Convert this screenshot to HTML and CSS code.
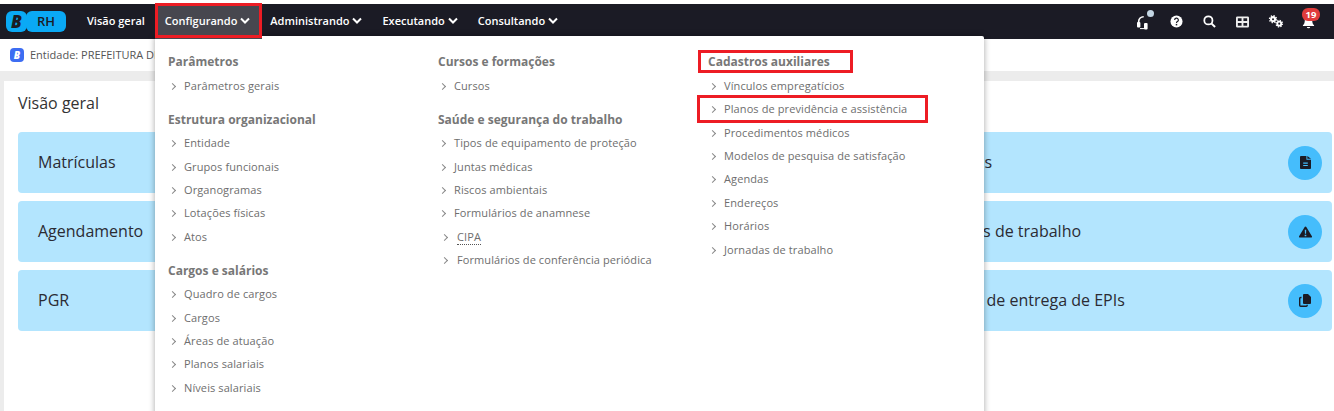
FILE: index.html
```html
<!DOCTYPE html>
<html lang="en">
<head>
  <meta charset="UTF-8" />
  <meta name="viewport" content="width=device-width, initial-scale=1.0" />
  <title>RH - Visão geral</title>
  <link rel="stylesheet" href="styles.css">
</head>
<body>
  <header class="navbar">
    <div class="logo"><span class="logo-b">B</span><span class="logo-rh">RH</span></div>
    <nav class="nav-links">
      <a class="nav-link">Visão geral</a>
      <a class="nav-link nav-active">Configurando <svg class="chev" viewBox="0 0 10 7"><path d="M1 1.500l4 4 4-4" /></svg></a>
      <a class="nav-link">Administrando <svg class="chev" viewBox="0 0 10 7"><path d="M1 1.500l4 4 4-4" /></svg></a>
      <a class="nav-link">Executando <svg class="chev" viewBox="0 0 10 7"><path d="M1 1.500l4 4 4-4" /></svg></a>
      <a class="nav-link">Consultando <svg class="chev" viewBox="0 0 10 7"><path d="M1 1.500l4 4 4-4" /></svg></a>
    </nav>
    <div class="nav-icons">
      <span class="nav-icon icon-headset">
        <svg viewBox="0 0 16 16" width="16" height="16"><path d="M2.700 10V7.500a4.800 4.800 0 0 1 5-4.800" fill="none" stroke="#fff" stroke-width="1.600"/><rect x="1" y="8" width="3.400" height="5.500" rx="1" fill="#fff"/><rect x="8" y="9" width="3.600" height="6.500" rx="1" fill="#fff"/><path d="M4 14.600h4" stroke="#fff" stroke-width="1"/></svg>
        <i class="status-dot"></i>
      </span>
      <span class="nav-icon">
        <svg viewBox="0 0 14 14" width="13" height="13"><circle cx="7" cy="7" r="6.500" fill="#fff"/><path d="M5 5.400a2 2 0 1 1 3 1.700c-.7.4-1 .7-1 1.400" fill="none" stroke="#1b1b25" stroke-width="1.300"/><rect x="6.200" y="9.600" width="1.600" height="1.600" fill="#1b1b25"/></svg>
      </span>
      <span class="nav-icon">
        <svg viewBox="0 0 14 14" width="13" height="13"><circle cx="5.800" cy="5.800" r="4.400" fill="none" stroke="#fff" stroke-width="1.900"/><path d="M9 9l4 4" stroke="#fff" stroke-width="2.200"/></svg>
      </span>
      <span class="nav-icon">
        <svg viewBox="0 0 14 12" width="13" height="12"><path fill="#eee" fill-rule="evenodd" d="M1.500 0h11A1.500 1.500 0 0 1 14 1.500v9a1.500 1.500 0 0 1-1.500 1.500h-11A1.500 1.500 0 0 1 0 10.500v-9A1.500 1.500 0 0 1 1.500 0zM2 2v3h4V2zm6 0v3h4V2zM2 7v3h4V7zm6 0v3h4V7z"/></svg>
      </span>
      <span class="nav-icon">
        <svg viewBox="0 0 16 14" width="16" height="13"><g fill="none" stroke="#fff"><circle cx="4.800" cy="4.500" r="2.200" stroke-width="2.200"/><circle cx="4.800" cy="4.500" r="3.800" stroke-width="1.400" stroke-dasharray="1.500 1.480"/><circle cx="11.500" cy="9.300" r="2.100" stroke-width="2"/><circle cx="11.500" cy="9.300" r="3.500" stroke-width="1.300" stroke-dasharray="1.400 1.350"/></g></svg>
      </span>
      <span class="nav-icon icon-bell">
        <svg viewBox="0 0 14 14" width="13" height="14"><path fill="#fff" d="M7 1a4 4 0 0 1 4 4c0 3 .8 4.400 2 5.500v.8H1v-.8C2.200 9.400 3 8 3 5a4 4 0 0 1 4-4z"/><path fill="#fff" d="M5.200 12.300h3.600a1.800 1.400 0 0 1-3.600 0z"/></svg>
        <b class="badge">19</b>
      </span>
    </div>
  </header>

  <div class="entity-bar">
    <span class="entity-icon">B</span>
    <span>Entidade: PREFEITURA DE</span>
  </div>

  <main class="overview">
    <h1 class="overview-title">Visão geral</h1>
    <div class="card-grid">
      <div class="card"><span>Matrículas</span></div>
      <div class="card"></div>
      <div class="card">
        <span>Atestados</span>
        <i class="card-icon"><svg viewBox="0 0 12 14" width="11" height="13"><path fill="#1b1b25" fill-rule="evenodd" d="M1 0h6v4h5v9a1 1 0 0 1-1 1H1a1 1 0 0 1-1-1V1a1 1 0 0 1 1-1zm2.500 7v1.300h5V7zm0 2.600v1.300h5V9.600zM8 0l4 3H8z"/></svg></i>
      </div>
      <div class="card"><span>Agendamento</span></div>
      <div class="card"></div>
      <div class="card">
        <span>Acidentes de trabalho</span>
        <i class="card-icon"><svg viewBox="0 0 14 12" width="13" height="12"><path fill="#1b1b25" fill-rule="evenodd" d="M7 0c.4 0 .7.2.9.5l6 10c.4.7 0 1.500-.9 1.500H1c-.9 0-1.300-.8-.9-1.500l6-10C6.300.2 6.600 0 7 0zM6.200 3.500l.2 4.500h1.200l.2-4.500zM6.100 9v1.600h1.800V9z"/></svg></i>
      </div>
      <div class="card"><span>PGR</span></div>
      <div class="card"></div>
      <div class="card">
        <span>Controle de entrega de EPIs</span>
        <i class="card-icon"><svg viewBox="0 0 12 13" width="12" height="13"><path fill="#1b1b25" d="M5 0h4l3 3v6a1 1 0 0 1-1 1H5a1 1 0 0 1-1-1V1a1 1 0 0 1 1-1z"/><path fill="none" stroke="#1b1b25" stroke-width="1.400" d="M2.500 3.500h-.8a1 1 0 0 0-1 1v6.800a1 1 0 0 0 1 1h5.500a1 1 0 0 0 1-1v-.5"/></svg></i>
      </div>
    </div>
  </main>

  <!-- Configurando dropdown -->
  <div class="mega-menu">
    <div class="menu-col">
      <h3>Parâmetros</h3>
      <a class="menu-item">Parâmetros gerais</a>
      <h3 class="next">Estrutura organizacional</h3>
      <a class="menu-item">Entidade</a>
      <a class="menu-item">Grupos funcionais</a>
      <a class="menu-item">Organogramas</a>
      <a class="menu-item">Lotações físicas</a>
      <a class="menu-item">Atos</a>
      <h3 class="next">Cargos e salários</h3>
      <a class="menu-item">Quadro de cargos</a>
      <a class="menu-item">Cargos</a>
      <a class="menu-item">Áreas de atuação</a>
      <a class="menu-item">Planos salariais</a>
      <a class="menu-item">Níveis salariais</a>
    </div>
    <div class="menu-col">
      <h3>Cursos e formações</h3>
      <a class="menu-item">Cursos</a>
      <h3 class="next">Saúde e segurança do trabalho</h3>
      <a class="menu-item">Tipos de equipamento de proteção</a>
      <a class="menu-item">Juntas médicas</a>
      <a class="menu-item">Riscos ambientais</a>
      <a class="menu-item">Formulários de anamnese</a>
      <a class="menu-item item-wide"><span class="dotted">CIPA</span></a>
      <a class="menu-item item-wide">Formulários de conferência periódica</a>
    </div>
    <div class="menu-col">
      <h3>Cadastros auxiliares</h3>
      <a class="menu-item">Vínculos empregatícios</a>
      <a class="menu-item">Planos de previdência e assistência</a>
      <a class="menu-item">Procedimentos médicos</a>
      <a class="menu-item">Modelos de pesquisa de satisfação</a>
      <a class="menu-item">Agendas</a>
      <a class="menu-item">Endereços</a>
      <a class="menu-item">Horários</a>
      <a class="menu-item">Jornadas de trabalho</a>
    </div>
  </div>

  <!-- red highlight boxes -->
  <div class="mark mark-nav"></div>
  <div class="mark mark-head"></div>
  <div class="mark mark-item"></div>
</body>
</html>
```

FILE: styles.css
```css
* {
  box-sizing: border-box;
}
html, body {
  height: 411px;
  overflow: hidden;
}
body {
  font-family: 'Open Sans', sans-serif;
  margin: 0;
  padding-top: 4px;
  background: #fff;
  color: #333;
  position: relative;
}

/* Navbar */
.navbar {
  height: 35px;
  background: #1b1b25;
  color: #fff;
  display: flex;
  align-items: center;
  padding-left: 6px;
}
.logo {
  width: 60px;
  height: 21px;
  display: flex;
  color: #1b1b25;
}
.logo-b {
  width: 21px;
  background: #0aa9f5;
  border-radius: 6px;
  text-align: center;
  font-weight: 800;
  font-style: italic;
  font-size: 17px;
  line-height: 21px;
}
.logo-rh {
  flex: 1;
  background: #0aa9f5;
  border-radius: 6px;
  margin-left: -1px;
  padding-left: 11px;
  font-size: 13px;
  line-height: 21px;
  font-weight: 600;
}
.nav-links {
  display: flex;
  height: 100%;
  margin-left: 11px;
}
.nav-link {
  display: flex;
  align-items: center;
  gap: 3px;
  padding: 0 10px 2px 10px;
  font-size: 11px;
  font-weight: 600;
}
.nav-active {
  background: #47474f;
  padding-right: 12px;
  margin-right: -2px;
  position: relative;
  z-index: 2;
}
.chev {
  width: 10px;
  height: 7px;
  fill: none;
  stroke: #fff;
  stroke-width: 2;
}
.nav-icons {
  margin-left: auto;
  display: flex;
  align-items: center;
  padding-right: 17px;
  gap: 16px;
}
.nav-icon {
  width: 17px;
  height: 17px;
  display: flex;
  align-items: center;
  justify-content: center;
  position: relative;
}
.status-dot {
  position: absolute;
  top: -3px;
  right: -2px;
  width: 7px;
  height: 7px;
  border-radius: 50%;
  background: #c4d6e4;
}
.badge {
  position: absolute;
  top: -5px;
  left: 2px;
  width: 18px;
  height: 13px;
  border-radius: 6px;
  background: #e03c3c;
  font-size: 9.5px;
  line-height: 13px;
  text-align: center;
}

/* Entity bar */
.entity-bar {
  height: 32px;
  display: flex;
  align-items: center;
  gap: 6px;
  padding: 0 0 1px 10px;
  font-size: 11px;
  color: #555;
}
.entity-icon {
  width: 14px;
  height: 14px;
  border-radius: 4px;
  background: #3d6df2;
  color: #fff;
  font-size: 10px;
  font-weight: 800;
  font-style: italic;
  line-height: 14px;
  text-align: center;
}

/* Overview */
.overview {
  background: #fff;
  border-top: 10px solid #ececec;
  height: 340px;
  padding: 0 2px 0 4px;
  box-shadow: inset 4px 0 0 #ececec;
}
.overview-title {
  margin: 0;
  padding: 10px 0 0 14px;
  height: 51px;
  font-size: 16px;
  font-weight: 400;
  color: #333;
  line-height: 24px;
}
.card-grid {
  display: grid;
  grid-template-columns: 1fr 1fr 434px;
  gap: 8px;
  margin-left: 14px;
}
.card {
  height: 61px;
  background: #b3e5fe;
  border-radius: 4px;
  display: flex;
  align-items: center;
  justify-content: space-between;
  padding: 0 10px 0 20px;
  font-size: 16px;
  color: #2b2b33;
}
.card span {
  margin-bottom: 2px;
}
.card-icon {
  width: 34px;
  height: 34px;
  border-radius: 50%;
  background: #45bdfc;
  display: flex;
  align-items: center;
  justify-content: center;
}

/* Dropdown */
.mega-menu {
  position: absolute;
  left: 155px;
  top: 36px;
  width: 829px;
  height: 385px;
  background: #fff;
  border-radius: 0 2px 4px 4px;
  box-shadow: 0 0 6px rgba(0,0,0,0.35);
  padding: 11.800px 0 0 13px;
  display: flex;
}
.menu-col {
  width: 270px;
}
.menu-col h3 {
  margin: 0;
  height: 26px;
  font-size: 12px;
  line-height: 28px;
  font-weight: 700;
  color: #777;
}
.menu-col h3.next {
  margin-top: 9px;
  height: 25px;
}
.menu-item {
  display: block;
  height: 23.400px;
  line-height: 23.400px;
  padding-left: 16px;
  font-size: 11px;
  letter-spacing: 0.1px;
  color: #6e6e6e;
  position: relative;
}
.menu-item::before {
  content: "";
  position: absolute;
  left: 2px;
  top: 10px;
  width: 4px;
  height: 4px;
  border-top: 1px solid #888;
  border-right: 1px solid #888;
  transform: rotate(45deg);
}
.item-wide {
  padding-left: 19px;
}
.item-wide::before {
  left: 4px;
}
.dotted {
  border-bottom: 1px dotted #555;
}

/* Red boxes */
.mark {
  position: absolute;
  z-index: 3;
  border: 3px solid #ed1c24;
}
.mark-nav {
  left: 155px;
  top: 3px;
  width: 107px;
  height: 35px;
}
.mark-head {
  left: 698px;
  top: 50px;
  width: 155px;
  height: 23px;
}
.mark-item {
  left: 697px;
  top: 95px;
  width: 231px;
  height: 28px;
}
```
